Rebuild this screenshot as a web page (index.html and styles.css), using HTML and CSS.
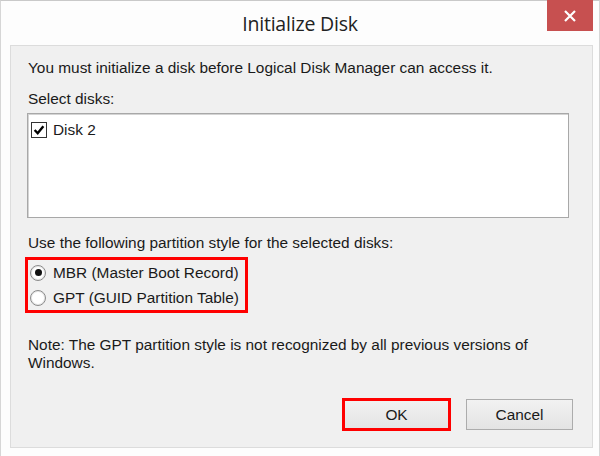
FILE: index.html
```html
<!DOCTYPE html>
<html>
<head>
<meta charset="utf-8">
<link rel="stylesheet" href="styles.css">
</head>
<body>
<div class="window">
  <div class="titlebar">
    <div class="title">Initialize Disk</div>
    <div class="close">
      <svg width="14" height="14" viewBox="0 0 14 14"><path d="M2 2 L12 12 M12 2 L2 12" stroke="#fff" stroke-width="2.2" fill="none"/></svg>
    </div>
  </div>
  <div class="panel">
    <p class="line intro">You must initialize a disk before Logical Disk Manager can access it.</p>
    <p class="line select">Select disks:</p>
    <div class="listbox">
      <div class="item">
        <span class="check"><svg width="12" height="12" viewBox="0 0 11 11"><path d="M1.5 5.5 L4.3 8.5 L9.5 2" stroke="#000" stroke-width="2.2" fill="none"/></svg></span>
        <span>Disk 2</span>
      </div>
    </div>
    <p class="line use">Use the following partition style for the selected disks:</p>
    <div class="highlight radios">
      <div class="radio-row"><span class="radio on"></span><span>MBR (Master Boot Record)</span></div>
      <div class="radio-row"><span class="radio"></span><span>GPT (GUID Partition Table)</span></div>
    </div>
    <p class="line note">Note: The GPT partition style is not recognized by all previous versions of<br>Windows.</p>
    <div class="buttons">
      <div class="btn ok">OK</div>
      <div class="btn">Cancel</div>
    </div>
  </div>
</div>
</body>
</html>
```
FILE: styles.css
```css
html, body {
  margin: 0;
  padding: 0;
  background: #fff;
}
.window {
  width: 600px;
  height: 456px;
  box-sizing: border-box;
  border-top: 1px solid #c9c9c9;
  border-left: 1px solid #d6d6d6;
  border-right: 1px solid #d6d6d6;
  background: #fdfdfd;
  display: flex;
  flex-direction: column;
  font-family: "Liberation Sans", Arial, sans-serif;
  font-size: 15.4px;
  color: #1a1a1a;
}
.titlebar {
  height: 44px;
  position: relative;
  display: flex;
  justify-content: center;
}
.title {
  font-family: "Open Sans", "Noto Sans", sans-serif;
  font-size: 19.5px;
  color: #222;
  padding-top: 9px;
  letter-spacing: -0.2px;
}
.close {
  position: absolute;
  right: 6px;
  top: -1px;
  width: 46px;
  height: 31px;
  background: #c75050;
  display: flex;
  align-items: center;
  justify-content: center;
}
.panel {
  margin: 0 6px 0 9px;
  height: 403px;
  box-sizing: border-box;
  border: 1px solid #dcdcdc;
  background: #f0f0f0;
  padding: 13px 19px 0 16px;
  display: flex;
  flex-direction: column;
}
.line {
  margin: 0;
  line-height: 18px;
  padding-left: 1px;
}
.select { margin-top: 13px; }
.listbox {
  margin-top: 5px;
  margin-right: 4px;
  height: 105px;
  box-sizing: border-box;
  border: 1px solid #a8a8a8;
  box-shadow: inset 1px 1px 0 #d4d4d4;
  background: #fff;
  padding: 7px 3px;
}
.item {
  display: flex;
  align-items: center;
  gap: 6px;
}
.check {
  width: 14px;
  height: 14px;
  border: 1px solid #333;
  background: #fff;
  display: flex;
  align-items: center;
  justify-content: center;
}
.use { margin-top: 16px; }
.highlight {
  border: 3px solid #f00;
}
.radios {
  margin-top: 5px;
  margin-left: -2px;
  width: 223px;
  box-sizing: border-box;
  padding: 0 0 0 2px;
}
.radio-row {
  height: 25px;
  display: flex;
  align-items: center;
  gap: 7px;
}
.radio {
  width: 16px;
  height: 16px;
  box-sizing: border-box;
  border-radius: 50%;
  border: 1px solid #8a8a8a;
  background: #fff;
  box-shadow: inset 0 0 0 1px #e6e6e6;
  display: flex;
  align-items: center;
  justify-content: center;
}
.radio.on::after {
  content: "";
  width: 7px;
  height: 7px;
  border-radius: 50%;
  background: #111;
}
.note { margin-top: 23px; }
.buttons {
  margin-top: 27px;
  display: flex;
  justify-content: flex-end;
  gap: 16px;
}
.btn {
  width: 107px;
  height: 31px;
  box-sizing: border-box;
  border: 1px solid #acacac;
  background: linear-gradient(#f2f2f2, #e3e3e3);
  display: flex;
  align-items: center;
  justify-content: center;
  font-size: 15.4px;
}
.btn.ok {
  outline: 3px solid #f00;
  outline-offset: -2px;
}
```
